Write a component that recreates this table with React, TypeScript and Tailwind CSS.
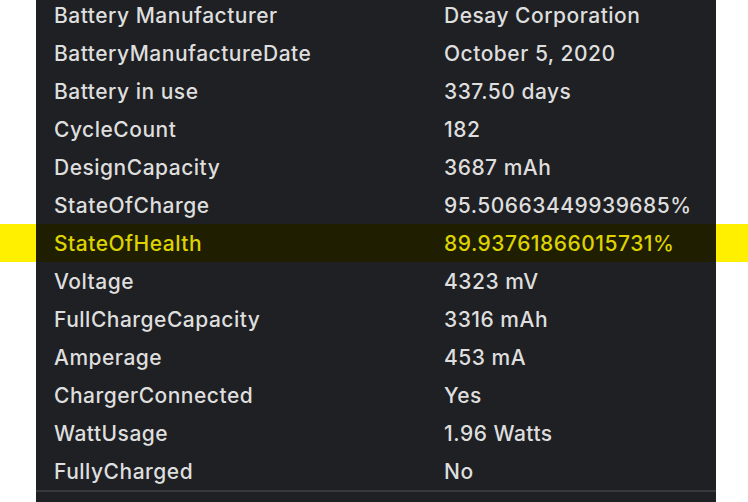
import React from "react";

const rows: [string, string][] = [
  ["Battery Manufacturer", "Desay Corporation"],
  ["BatteryManufactureDate", "October 5, 2020"],
  ["Battery in use", "337.50 days"],
  ["CycleCount", "182"],
  ["DesignCapacity", "3687 mAh"],
  ["StateOfCharge", "95.50663449939685%"],
  ["StateOfHealth", "89.93761866015731%"],
  ["Voltage", "4323 mV"],
  ["FullChargeCapacity", "3316 mAh"],
  ["Amperage", "453 mA"],
  ["ChargerConnected", "Yes"],
  ["WattUsage", "1.96 Watts"],
  ["FullyCharged", "No"],
];

export default function App() {
  return (
    <div
      className="w-[748px] h-[502px] overflow-hidden bg-white"
      style={{ fontFamily: "Inter, 'Open Sans', sans-serif" }}
    >
      <div className="-mt-[4px] flex flex-col">
        {rows.map(([k, v]) => {
          const hl = k === "StateOfHealth";
          return (
            <div
              key={k}
              className={`flex h-[38px] ${hl ? "bg-[#fff000]" : "bg-white"}`}
            >
              <div
                className={`ml-[36px] w-[680px] flex items-center pt-[2px] text-[21px] font-medium tracking-[0.5px] ${
                  hl ? "bg-[#1f1e00] text-[#dcd300]" : "bg-[#1f2023] text-[#dedede]"
                }`}
              >
                <div className="pl-[18px] w-[408px]">{k}</div>
                <div>{v}</div>
              </div>
            </div>
          );
        })}
        <div className="ml-[36px] w-[680px] h-[2px] bg-[#38393b]" />
        <div className="ml-[36px] w-[680px] h-[20px] bg-[#1f2023]" />
      </div>
    </div>
  );
}
